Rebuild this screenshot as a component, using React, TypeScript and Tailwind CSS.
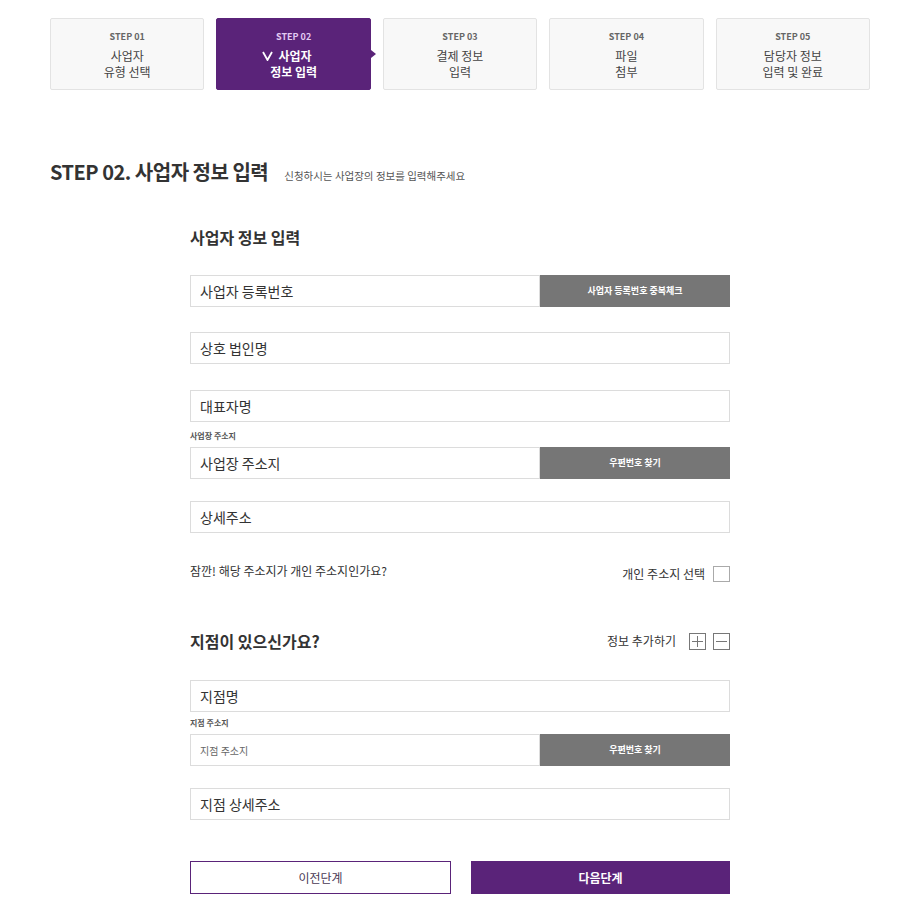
const font = {
  fontFamily: '"Noto Sans CJK KR", "Noto Sans", sans-serif',
};

const steps = [
  { no: "STEP 01", lines: ["사업자", "유형 선택"] },
  { no: "STEP 02", lines: ["사업자", "정보 입력"], active: true },
  { no: "STEP 03", lines: ["결제 정보", "입력"] },
  { no: "STEP 04", lines: ["파일", "첨부"] },
  { no: "STEP 05", lines: ["담당자 정보", "입력 및 완료"] },
];

const Field = ({
  value,
  button,
  small,
}: {
  value: string;
  button?: string;
  small?: boolean;
}) => (
  <div className="flex h-[32px] w-full">
    <div
      className={
        "flex flex-1 items-center border border-[#dcdcdc] bg-white pl-[9px] " +
        (small ? "text-[10px] text-[#666]" : "text-[14px] text-[#333]")
      }
    >
      {value}
    </div>
    {button && (
      <button className="flex w-[190px] items-center justify-center bg-[#767676] text-[9px] font-bold text-white">
        {button}
      </button>
    )}
  </div>
);

const SmallLabel = ({ children }: { children: string }) => (
  <p className="text-[8px] font-bold leading-[12px] text-[#555]">{children}</p>
);

export default function App() {
  return (
    <div className="min-h-[913px] bg-white pt-[18px] pb-[20px]" style={font}>
      <div className="ml-[50px] w-[820px]">
        <ul className="grid grid-cols-5 gap-[12px]">
          {steps.map((s) => (
            <li
              key={s.no}
              className={
                "relative flex h-[72px] flex-col items-center justify-center rounded-[2px] border " +
                (s.active
                  ? "border-[#5a2379] bg-[#5a2379]"
                  : "border-[#e3e3e3] bg-[#f8f8f8]")
              }
            >
              <span
                className={
                  "-mt-[1px] text-[9px] font-bold leading-[13px] " +
                  (s.active ? "text-[#e3c9f2]" : "text-[#666]")
                }
              >
                {s.no}
              </span>
              {s.active ? (
                <div className="mt-[5px] -mb-[2px] flex flex-col items-center text-[12px] font-bold leading-[16px] text-white">
                  <span className="-ml-[14px] flex items-center gap-[6px]">
                    <svg width="11" height="10" viewBox="0 0 11 10">
                      <polyline
                        points="1,1 5.5,9 10,1"
                        fill="none"
                        stroke="white"
                        strokeWidth="1.8"
                      />
                    </svg>
                    {s.lines[0]}
                  </span>
                  <span>{s.lines[1]}</span>
                </div>
              ) : (
                <div className="mt-[5px] -mb-[2px] flex flex-col items-center text-[12px] leading-[16px] text-[#444]">
                  <span>{s.lines[0]}</span>
                  <span>{s.lines[1]}</span>
                </div>
              )}
              {s.active && (
                <span className="absolute top-1/2 -right-[6px] h-0 w-0 -translate-y-1/2 border-y-[4px] border-l-[5px] border-y-transparent border-l-[#5a2379]" />
              )}
            </li>
          ))}
        </ul>

        <div className="mt-[68px] flex items-baseline">
          <h2 className="text-[20px] font-bold leading-[28px] tracking-[-0.5px] text-[#333]">
            STEP 02. 사업자 정보 입력
          </h2>
          <span className="ml-[16px] text-[10.5px] text-[#555]">
            신청하시는 사업장의 정보를 입력해주세요
          </span>
        </div>

        <div className="mx-auto w-[540px]">
          <h3 className="mt-[39px] text-[16px] font-bold leading-[24px] text-[#333]">
            사업자 정보 입력
          </h3>

          <div className="mt-[26px]">
            <Field value="사업자 등록번호" button="사업자 등록번호 중복체크" />
          </div>
          <div className="mt-[25px]">
            <Field value="상호 법인명" />
          </div>
          <div className="mt-[26px]">
            <Field value="대표자명" />
          </div>
          <div className="mt-[8px]">
            <SmallLabel>사업장 주소지</SmallLabel>
          </div>
          <div className="mt-[5px]">
            <Field value="사업장 주소지" button="우편번호 찾기" />
          </div>
          <div className="mt-[22px]">
            <Field value="상세주소" />
          </div>

          <div className="mt-[32px] flex h-[17px] items-center justify-between text-[12px] text-[#333]">
            <span className="-mt-[5px]">
              잠깐! 해당 주소지가 개인 주소지인가요?
            </span>
            <label className="flex items-center gap-[8px]">
              개인 주소지 선택
              <span className="h-[16px] w-[17px] border border-[#aaa] bg-white" />
            </label>
          </div>

          <div className="mt-[47px] flex h-[24px] items-center justify-between">
            <h3 className="text-[16px] font-bold text-[#333]">
              지점이 있으신가요?
            </h3>
            <div className="flex items-center text-[12px] text-[#333]">
              <span className="mr-[13px]">정보 추가하기</span>
              <button className="flex h-[17px] w-[17px] items-center justify-center border border-[#777]">
                <svg width="11" height="11" viewBox="0 0 11 11">
                  <path d="M5.5 0V11M0 5.5H11" stroke="#777" strokeWidth="1" />
                </svg>
              </button>
              <button className="ml-[7px] flex h-[17px] w-[17px] items-center justify-center border border-[#777]">
                <svg width="11" height="11" viewBox="0 0 11 11">
                  <path d="M0 5.5H11" stroke="#777" strokeWidth="1" />
                </svg>
              </button>
            </div>
          </div>

          <div className="mt-[27px]">
            <Field value="지점명" />
          </div>
          <div className="mt-[5px]">
            <SmallLabel>지점 주소지</SmallLabel>
          </div>
          <div className="mt-[5px]">
            <Field value="지점 주소지" button="우편번호 찾기" small />
          </div>
          <div className="mt-[22px]">
            <Field value="지점 상세주소" />
          </div>

          <div className="mt-[41px] flex gap-[20px]">
            <button className="h-[33px] flex-1 border border-[#5a2379] bg-white text-[12px] text-[#4a3a55]">
              이전단계
            </button>
            <button className="h-[33px] flex-1 bg-[#5a2379] text-[12px] font-bold text-white">
              다음단계
            </button>
          </div>
        </div>
      </div>
    </div>
  );
}
